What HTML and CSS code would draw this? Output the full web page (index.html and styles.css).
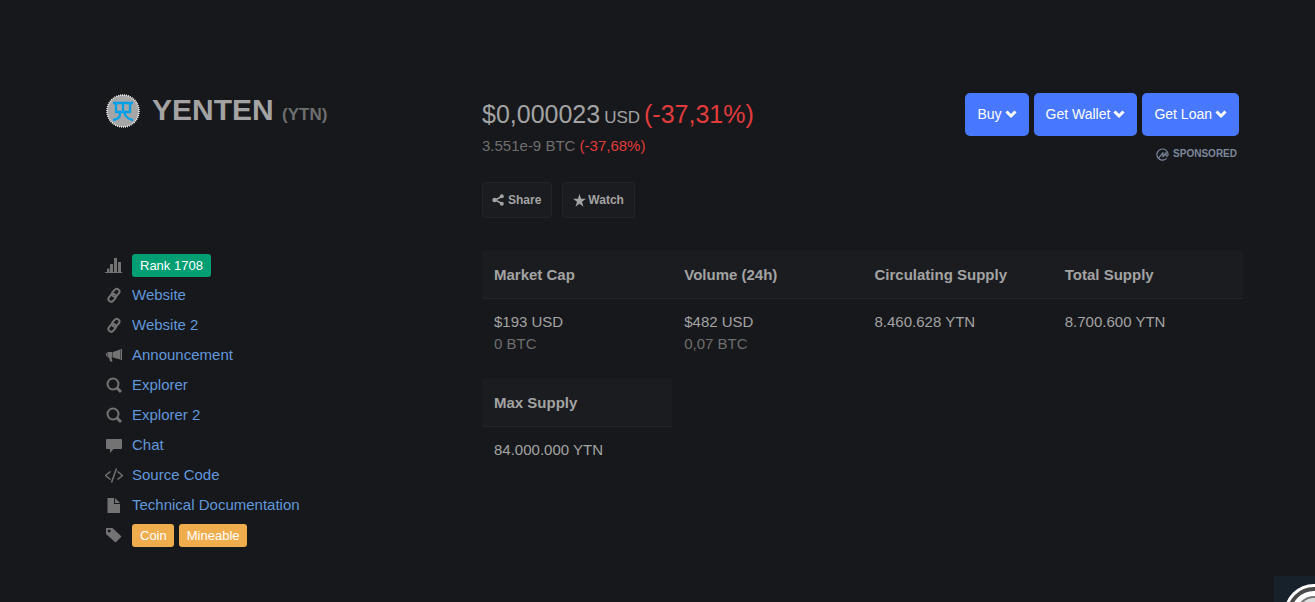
FILE: index.html
```html
<!DOCTYPE html>
<html lang="en">
<head>
    <meta charset="UTF-8">
    <meta name="viewport" content="width=device-width, initial-scale=1.0">
    <title>YENTEN (YTN)</title>
    <link rel="stylesheet" href="styles.css">
</head>
<body>
  <!-- shared icons -->
  <svg class="sprite" aria-hidden="true">
    <symbol id="chevron" viewBox="0 0 12 10"><path d="M1.500 2.500L6 7l4.500-4.500" fill="none" stroke="currentColor" stroke-width="3"/></symbol>
    <symbol id="link" viewBox="0 0 18 18"><g fill="none" stroke="currentColor" stroke-width="2"><rect x="8" y="2.500" width="5.500" height="8.500" rx="2.700" transform="rotate(40 10.700 6.700)"/><rect x="4.500" y="7.500" width="5.500" height="8.500" rx="2.700" transform="rotate(40 7.200 11.700)"/></g></symbol>
    <symbol id="search" viewBox="0 0 18 18"><circle cx="8" cy="8" r="5.500" fill="none" stroke="currentColor" stroke-width="2"/><path d="M12 12l4 4" stroke="currentColor" stroke-width="3"/></symbol>
  </svg>

  <div class="coin">
    <div class="coin-head">
      <svg class="coin-logo" viewBox="0 0 34 34" aria-hidden="true">
        <circle cx="17" cy="17" r="16" fill="#a6a6a6"/>
        <circle cx="17" cy="17" r="16" fill="none" stroke="#fff" stroke-width="1.500" stroke-dasharray="1 1"/>
        <g fill="none" stroke="#00a0e9" stroke-width="2.300"><path d="M7 9h20M10 9v9M24 9v9M17 9v9M9 18h16M14 18v2q0 5-7 6M18 18q2 7 9 8"/></g>
      </svg>
      <h1 class="coin-name">YENTEN <small>(YTN)</small></h1>
    </div>

    <div class="coin-top">
      <div class="price-box">
        <div class="price">$0,000023 <span class="currency">USD</span> <span class="down">(-37,31%)</span></div>
        <div class="price-btc">3.551e-9 BTC <span class="down">(-37,68%)</span></div>
        <div class="tools">
          <button type="button" class="tool"><svg viewBox="0 0 12 12" width="12" height="12"><path d="M10 2.500L3 6l7 3.500" fill="none" stroke="currentColor" stroke-width="1.500"/><circle cx="2.500" cy="6" r="2.200"/><circle cx="9.800" cy="2.300" r="2"/><circle cx="9.800" cy="9.700" r="2"/></svg>Share</button>
          <button type="button" class="tool watch"><svg viewBox="0 0 13 13" width="13" height="13"><path d="M6.500 0l1.600 4.800H13L9 7.800l1.500 4.900-4-3-4 3L4 7.800 0 4.800h4.900z"/></svg>Watch</button>
        </div>
      </div>
      <div class="buy-box">
        <div class="buy-buttons">
          <button type="button" class="buy">Buy <svg width="12" height="10"><use href="#chevron"/></svg></button>
          <button type="button" class="buy">Get Wallet <svg width="12" height="10"><use href="#chevron"/></svg></button>
          <button type="button" class="buy">Get Loan <svg width="12" height="10"><use href="#chevron"/></svg></button>
        </div>
        <div class="sponsored">
          <svg viewBox="0 0 14 14" width="13" height="13"><g fill="none" stroke="currentColor" stroke-width="1.300" stroke-linecap="round" stroke-linejoin="round"><path d="M11.200 11.400A6 6 0 1 1 13 7c0 2.200-2.200 2.400-2.200.6V5L7.500 9.500V5L3.500 10"/></g></svg>
          SPONSORED
        </div>
      </div>
    </div>

    <ul class="links">
      <li><svg viewBox="0 0 18 18"><path d="M0 16h17v1H0zM2 12.500h2.500V16H2zM5 8h3v8H5zM9 2h3v14H9zM13 6h3v10h-3z"/></svg><span class="badge rank">Rank 1708</span></li>
      <li><svg><use href="#link"/></svg><a href="#">Website</a></li>
      <li><svg><use href="#link"/></svg><a href="#">Website 2</a></li>
      <li><svg viewBox="0 0 18 18"><path d="M15.500 3H17v11h-1.500zM15 3.500v10L8 11.500V6zM2.500 6H7.500v5.500H2.500zM1 7h1v3H1zM4 11.500h2.500l1 4H5z"/></svg><a href="#">Announcement</a></li>
      <li><svg><use href="#search"/></svg><a href="#">Explorer</a></li>
      <li><svg><use href="#search"/></svg><a href="#">Explorer 2</a></li>
      <li><svg viewBox="0 0 18 18"><path d="M2 3h14q1 0 1 1v8q0 1-1 1H8.500L5 17v-4H2q-1 0-1-1V4q0-1 1-1z"/></svg><a href="#">Chat</a></li>
      <li><svg viewBox="0 0 18 18"><path d="M5.500 5.500L.5 9.500l5 4M12.500 5.500l5 4-5 4M11.500 2.500l-5 14" fill="none" stroke="currentColor" stroke-width="1.500"/></svg><a href="#">Source Code</a></li>
      <li><svg viewBox="0 0 18 18"><path d="M2.500 2H9v6h6v9H2.500zM10 2l5 5h-5z"/></svg><a href="#">Technical Documentation</a></li>
      <li><svg viewBox="0 0 18 18"><path fill-rule="evenodd" d="M1 2h6.500l9 8.500-6 6L1 8zM4.200 3.500a1.500 1.500 0 1 0 .01 0z"/></svg><span class="badge tag">Coin</span><span class="badge tag">Mineable</span></li>
    </ul>

    <dl class="stats">
      <div class="stat">
        <dt>Market Cap</dt>
        <dd>$193 USD</dd>
        <dd class="btc">0 BTC</dd>
      </div>
      <div class="stat">
        <dt>Volume (24h)</dt>
        <dd>$482 USD</dd>
        <dd class="btc">0,07 BTC</dd>
      </div>
      <div class="stat">
        <dt>Circulating Supply</dt>
        <dd>8.460.628 YTN</dd>
      </div>
      <div class="stat">
        <dt>Total Supply</dt>
        <dd>8.700.600 YTN</dd>
      </div>
      <div class="stat">
        <dt>Max Supply</dt>
        <dd>84.000.000 YTN</dd>
      </div>
    </dl>
  </div>

  <div class="corner">
    <svg viewBox="0 0 41 26" width="41" height="26" aria-hidden="true">
      <circle cx="40" cy="38" r="30" fill="#fff"/>
      <circle cx="40" cy="38" r="25" fill="none" stroke="#4a4a4a" stroke-width="4"/>
      <circle cx="40" cy="38" r="18" fill="#777"/>
      <circle cx="40" cy="38" r="16" fill="#ddd"/>
    </svg>
  </div>
</body>
</html>
```

FILE: styles.css
```css
*{
    box-sizing: border-box;
}
body{
    margin: 0;
    background-color: #17181b;
    color: #a3a3a3;
    font-family: "Liberation Sans", Arial, sans-serif;
    font-size: 15px;
    line-height: 22px;
}
svg{
    fill: currentColor;
    flex: none;
}
.sprite{
    position: absolute;
    width: 0;
    height: 0;
}
button{
    font-family: inherit;
    cursor: pointer;
}
.coin{
    display: grid;
    grid-template-columns: 376px 1fr;
    row-gap: 32px;
    padding: 93px 72px 0 106px;
}
.coin-head{
    display: flex;
    align-items: flex-start;
    align-self: start;
    gap: 12px;
}
.coin-name{
    margin: 0;
    font-size: 30px;
    line-height: 34px;
}
.coin-name small{
    font-size: 17px;
    color: #6e6e6e;
}
.coin-logo{
    width: 34px;
    height: 34px;
    margin-top: 1px;
}
.coin-top{
    display: flex;
    justify-content: space-between;
}
.price-box{
    padding-top: 5px;
}
.price{
    font-size: 25px;
    line-height: 32px;
}
.currency{
    font-size: 17px;
    margin: 0 -3px;
}
.down{
    color: #e03c3c;
}
.price-btc{
    margin-top: 3px;
    line-height: 18px;
    color: #6e6e6e;
}
.tools{
    display: flex;
    gap: 10px;
    margin-top: 27px;
}
.tool{
    display: flex;
    align-items: center;
    gap: 4px;
    height: 36px;
    padding: 0 10px 0 9px;
    background-color: #1b1c1f;
    border: 1px solid #232427;
    border-radius: 4px;
    color: #a3a3a3;
    font-size: 12px;
    font-weight: bold;
}
.watch{
    gap: 2px;
    padding: 0 10px;
}
.buy-box{
    padding-right: 4px;
}
.buy-buttons{
    display: flex;
    gap: 5px;
}
.buy{
    display: flex;
    align-items: center;
    gap: 3px;
    height: 43px;
    padding: 0 12px 1px;
    background-color: #4878ff;
    border: none;
    border-radius: 5px;
    color: white;
    font-size: 14px;
}
.sponsored{
    display: flex;
    align-items: center;
    justify-content: flex-end;
    gap: 4px;
    margin-top: 7px;
    padding-right: 2px;
    color: #7d879b;
    font-size: 10px;
    font-weight: bold;
}
.links{
    margin: 0 0 0 -1px;
    padding: 0;
    list-style: none;
}
.links li{
    display: flex;
    align-items: center;
    height: 30px;
}
.links svg{
    width: 18px;
    height: 18px;
    margin-right: 9px;
    color: #737373;
}
.links a{
    color: #6197dc;
    text-decoration: none;
}
.badge{
    margin-right: 5px;
    padding: 0 8px;
    border-radius: 3px;
    color: white;
    font-size: 13px;
    line-height: 23px;
}
.rank{
    background-color: #009e73;
}
.tag{
    padding: 0 7px 0 8px;
    background-color: #f0ad4e;
}
.stats{
    display: grid;
    grid-template-columns: repeat(4, 1fr);
    row-gap: 12px;
    align-content: start;
    margin: 1px 0 0;
}
.stat{
    padding-bottom: 12px;
}
.stat dt{
    margin-bottom: 12px;
    padding: 13px 12px 12px;
    background-color: #1b1c1f;
    border-bottom: 1px solid #242528;
    font-weight: bold;
}
.stat dd{
    margin: 0;
    padding: 0 12px;
}
.stat .btc{
    color: #6e6e6e;
}
/* floating widget in the page corner */
.corner{
    position: fixed;
    right: 0;
    bottom: 0;
    height: 26px;
    background-color: #17212b;
}
```
